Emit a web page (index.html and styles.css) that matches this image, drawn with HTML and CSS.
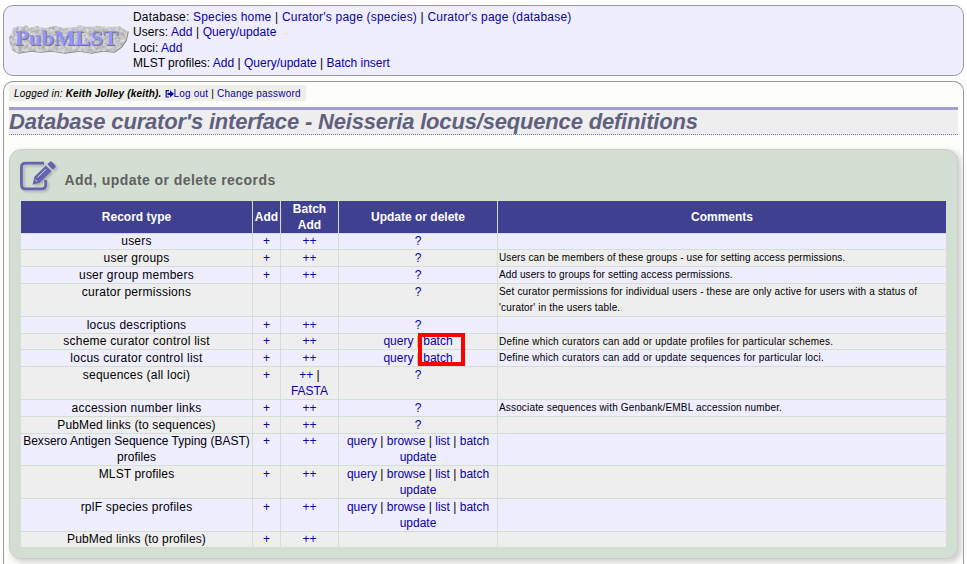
FILE: index.html
```html
<!DOCTYPE html>
<html lang="en">
<head>
<meta charset="utf-8">
<title>Database curator's interface</title>
<link rel="stylesheet" href="styles.css">
</head>
<body>
<header class="menu">
  <svg class="logo" width="122" height="34" viewBox="0 0 122 34">
    <defs><filter id="rough" x="-5%" y="-10%" width="110%" height="125%" color-interpolation-filters="sRGB"><feTurbulence type="fractalNoise" baseFrequency="0.3" numOctaves="3" seed="4" result="n"/><feColorMatrix in="n" type="matrix" values="0.35 0 0 0 0.6  0.35 0 0 0 0.6  0.35 0 0 0 0.6  0 0 0 0 1" result="g"/><feComposite in="g" in2="SourceGraphic" operator="in"/></filter></defs>
    <path fill="#888" d="M4 5L10 3 14 4 17 2 20 5 28 3 36 5 46 3 55 5 67 4 71 2 76 4 90 3 103 4 110 3 114 6 119 8 117 17 112 24 105 29 93 28 82 30 70 28 55 30 42 28 31 29 21 28 9 30 3 27 1 22 0 14 3 10Z" transform="translate(.8 .8)"/>
    <path filter="url(#rough)" fill="#bbb" d="M4 5L10 3 14 4 17 2 20 5 28 3 36 5 46 3 55 5 67 4 71 2 76 4 90 3 103 4 110 3 114 6 119 8 117 17 112 24 105 29 93 28 82 30 70 28 55 30 42 28 31 29 21 28 9 30 3 27 1 22 0 14 3 10Z"/>
    <text class="logo-shade" x="6.8" y="22.700" textLength="103" lengthAdjust="spacingAndGlyphs">PubMLST</text>
    <text class="logo-text" x="6" y="22" textLength="103" lengthAdjust="spacingAndGlyphs">PubMLST</text>
  </svg>
  <div class="links">
    <div class="wide">Database: <a>Species home</a> | <a>Curator's page (species)</a> | <a>Curator's page (database)</a></div>
    <div class="users">Users: <a>Add</a> | <a>Query/update</a></div>
    <div>Loci: <a>Add</a></div>
    <div>MLST profiles: <a>Add</a> | <a>Query/update</a> | <a>Batch insert</a></div>
  </div>
</header>
<main class="page">
  <div class="login"><i>Logged in: <b>Keith Jolley (keith).</b></i> <a><svg class="exit" width="9" height="8" viewBox="0 0 9 8"><path d="M4 .7H1.2V7H4" fill="none" stroke="currentColor" stroke-width="1.2"/><path d="M2.5 2.7H5V.3L9 3.9 5 7.500V5H2.5Z" fill="currentColor"/></svg>Log out</a> | <a>Change password</a></div>
  <h1>Database curator's interface - Neisseria locus/sequence definitions</h1>
  <section class="box">
    <div class="heading">
      <svg class="edit" width="42" height="38" viewBox="0 0 42 38"><path fill="none" stroke="#6464ae" stroke-width="2.800" d="M26 5.200H7.500Q3.400 5.200 3.400 9.300V26.700Q3.400 30.800 7.500 30.800H23.500Q27.700 30.800 27.700 26.700V22"/><path fill="#6464ae" d="M16.500 18.500L28 7.500 33.500 13 21.800 24.800 14.500 26.800ZM29.300 6.200L31.800 3.700Q32.800 3 33.800 3.700L37.300 7.200Q38 8.200 37.300 9.200L34.800 11.700Z"/><path d="M19.500 19.500L28 11.200M17 21.500L19.200 23.700" stroke="#d4dfd4" stroke-width="1"/></svg>
      <h2>Add, update or delete records</h2>
    </div>
    <table>
      <colgroup><col class="c1"><col class="c2"><col class="c3"><col class="c4"><col></colgroup>
      <thead><tr><th>Record type</th><th>Add</th><th>Batch<br>Add</th><th>Update or delete</th><th>Comments</th></tr></thead>
      <tbody>
      <tr class="h16"><td>users</td><td><a>+</a></td><td><a>++</a></td><td><a>?</a></td><td></td></tr>
      <tr class="h17"><td>user groups</td><td><a>+</a></td><td><a>++</a></td><td><a>?</a></td><td><span class="snug-note">Users can be members of these groups - use for setting access permissions.</span></td></tr>
      <tr class="h17"><td>user group members</td><td><a>+</a></td><td><a>++</a></td><td><a>?</a></td><td><span class="snug-note">Add users to groups for setting access permissions.</span></td></tr>
      <tr class="h33"><td>curator permissions</td><td></td><td></td><td><a>?</a></td><td>Set curator permissions for individual users - these are only active for users with a status of<br>'curator' in the users table.</td></tr>
      <tr class="h17"><td>locus descriptions</td><td><a>+</a></td><td><a>++</a></td><td><a>?</a></td><td></td></tr>
      <tr class="h16"><td>scheme curator control list</td><td><a>+</a></td><td><a>++</a></td><td><a>query</a> | <a class="marked">batch</a></td><td><span class="wide-note">Define which curators can add or update profiles for particular schemes.</span></td></tr>
      <tr class="h17"><td>locus curator control list</td><td><a>+</a></td><td><a>++</a></td><td><a>query</a> | <a>batch</a></td><td><span class="wide-note">Define which curators can add or update sequences for particular loci.</span></td></tr>
      <tr class="h33"><td>sequences (all loci)</td><td><a>+</a></td><td><a>++</a> |<br><a>FASTA</a></td><td><a>?</a></td><td></td></tr>
      <tr class="h17"><td>accession number links</td><td><a>+</a></td><td><a>++</a></td><td><a>?</a></td><td>Associate sequences with Genbank/EMBL accession number.</td></tr>
      <tr class="h17"><td class="snug">PubMed links (to sequences)</td><td><a>+</a></td><td><a>++</a></td><td><a>?</a></td><td></td></tr>
      <tr class="h32"><td class="tight">Bexsero Antigen Sequence Typing (BAST)<br>profiles</td><td><a>+</a></td><td><a>++</a></td><td><a>query</a> | <a>browse</a> | <a>list</a> | <a>batch<br>update</a></td><td></td></tr>
      <tr class="h33"><td class="snug">MLST profiles</td><td><a>+</a></td><td><a>++</a></td><td><a>query</a> | <a>browse</a> | <a>list</a> | <a>batch<br>update</a></td><td></td></tr>
      <tr class="h33"><td>rplF species profiles</td><td><a>+</a></td><td><a>++</a></td><td><a>query</a> | <a>browse</a> | <a>list</a> | <a>batch<br>update</a></td><td></td></tr>
      <tr class="h16"><td class="snug">PubMed links (to profiles)</td><td><a>+</a></td><td><a>++</a></td><td></td><td></td></tr>
      </tbody>
    </table>
  </section>
</main>
</body>
</html>
```
FILE: styles.css
```css
*, *::after { box-sizing: border-box; }
body { margin: 0; padding: 5px 3px 0; height: 564px; overflow: hidden; background: #fff; font: 12px/16px "Liberation Sans", Arial, sans-serif; color: #000; }
a { color: #0a00aa; }
.menu { display: flex; height: 71px; border: 1px solid #999; border-radius: 10px; background: #eef; padding: 3px 5px 0; }
.logo { margin-top: 14px; overflow: visible; flex: none; }
.logo-text, .logo-shade { font: bold 22px "Liberation Serif", serif; fill: #9494fa; }
.logo-shade { fill: #777; }
.links { margin-left: 2px; padding-top: .6px; line-height: 15.6px; white-space: nowrap; }
.wide { letter-spacing: .2px; }
.users { letter-spacing: .09px; }
.page { margin-top: 5px; height: 483px; border: 1px solid #999; border-bottom: 0; border-radius: 10px 10px 0 0; background: #fdfdf9; padding: 3px 5px 0; }
.login { width: 297px; height: 16px; background: #eeeeea; padding-left: 5px; font-size: 10px; line-height: 17px; letter-spacing: .2px; white-space: nowrap; }
.exit { vertical-align: -1px; }
h1 { margin: 6px 0 0; height: 28px; border-top: 3px solid #a0a0d0; border-bottom: 1px dotted #7575b2; background: #eee; font: italic bold 22px/24px "Liberation Sans", Arial, sans-serif; letter-spacing: -.18px; color: #606080; white-space: nowrap; }
.box { margin-top: 14px; height: 410px; border: 1px solid #ccc; border-radius: 12px; background: #d4dfd4; padding: 0 11px; box-shadow: 3px 3px 6px #ccc; }
.heading { display: flex; height: 51px; padding-top: 8px; }
.edit { margin-left: -3px; filter: drop-shadow(2px 2px 1px #9999); flex: none; }
h2 { margin: 12px 0 0 4.500px; font-size: 14px; line-height: 20px; color: #606060; letter-spacing: .44px; }
table { table-layout: fixed; width: 925px; border-collapse: separate; border-spacing: 0; text-align: center; }
.c1 { width: 231px; } .c2 { width: 28px; } .c3 { width: 58px; } .c4 { width: 159px; }
th, td { padding: 0; border-left: 1px solid #d4dfd4; white-space: nowrap; }
th:first-child, td:first-child { border-left: 0; }
th { height: 32px; background: #404090; color: #fff; }
td { border-top: 1px solid #d4dfd4; vertical-align: top; }
td:first-child { letter-spacing: .24px; }
td.snug { letter-spacing: .14px; }
td.tight { letter-spacing: .02px; }
tbody tr { background: #eee; }
tbody tr:nth-child(odd) { background: #eef; }
td:last-child { text-align: left; font-size: 10px; letter-spacing: .16px; padding-left: 1px; }
.snug-note { letter-spacing: .09px; }
.wide-note { letter-spacing: .22px; }
.h16 { height: 16px; line-height: 15px; }
.h17 { height: 17px; line-height: 16px; }
.h32 { height: 32px; line-height: 15.5px; }
.h33 { height: 33px; line-height: 16px; }
.marked { position: relative; }
.marked::after { content: ""; position: absolute; left: -5px; top: -1px; width: 47px; height: 33px; border: 4px solid #f00; }
```
